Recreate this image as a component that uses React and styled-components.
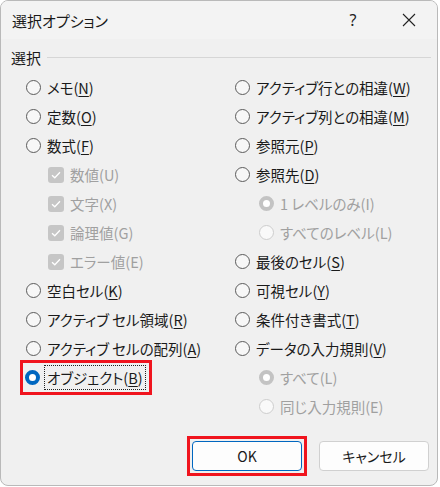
import React from 'react'
import styled, { createGlobalStyle } from 'styled-components'

const Global = createGlobalStyle`
  html, body { margin: 0; padding: 0; background: #ffffff; }
  body {
    font-family: "Noto Sans CJK JP", "Noto Sans", sans-serif;
    font-feature-settings: "palt";
    color: #1a1a1a;
  }
`

const Window = styled.div`
  width: 438px;
  height: 486px;
  box-sizing: border-box;
  border: 1px solid #b9b9b9;
  border-radius: 8px;
  background: #f0f0f0;
  display: flex;
  flex-direction: column;
  overflow: hidden;
`

const TitleBar = styled.div`
  height: 38px;
  display: flex;
  align-items: center;
  padding-left: 11px;
  background: #f3f3f3;
  font-size: 15px;
`

const Title = styled.div`
  flex: 1;
`

const TitleButton = styled.div`
  width: 56px;
  height: 38px;
  display: flex;
  align-items: center;
  justify-content: center;
  font-family: "Noto Sans", sans-serif;
  font-size: 16px;
  color: #222;
`

const GroupHead = styled.div`
  display: flex;
  align-items: center;
  gap: 6px;
  margin: 8px 6px 0 10px;
  height: 20px;
  font-size: 15px;
  &::after {
    content: '';
    flex: 1;
    height: 1px;
    background: #d6d6d6;
  }
`

const Columns = styled.div`
  display: grid;
  grid-template-columns: 209px 1fr;
  padding: 6px 0 0 25px;
`

const Column = styled.div`
  display: flex;
  flex-direction: column;
`

const Row = styled.div`
  height: 29px;
  display: flex;
  align-items: center;
  padding-left: ${p => p.indent || 0}px;
`

const Option = styled.div`
  display: inline-flex;
  align-items: center;
  gap: 6px;
  font-size: 14.5px;
  color: ${p => (p.disabled ? '#a0a0a0' : '#1a1a1a')};
  white-space: pre;
  ${p => p.highlight && `
    outline: 3px solid #f0141e;
    outline-offset: 0;
    padding: 4px 5px 4px 2px;
    margin-left: -3px;
  `}
`

const Radio = styled.span`
  width: 15px;
  height: 15px;
  box-sizing: border-box;
  border-radius: 50%;
  flex: none;
  ${p => {
    if (p.checked && p.disabled) return 'border: 4px solid #c3c3c3; background: #fff;'
    if (p.checked) return 'border: 4px solid #0067c0; background: #fff;'
    if (p.disabled) return 'border: 1px solid #cdcdcd; background: #f9f9f9;'
    return 'border: 1px solid #5b5b5b; background: #f7f7f7;'
  }}
`

const Check = styled.span`
  width: 16px;
  height: 16px;
  border-radius: 3px;
  background: #c6c6c6;
  flex: none;
  display: flex;
  align-items: center;
  justify-content: center;
`

const Label = styled.span`
  ${p => p.focus && `
    outline: 1px dotted #222;
    outline-offset: 1px;
    padding: 0 1px;
  `}
  u { text-decoration-thickness: 1px; text-underline-offset: 2px; }
`

const Footer = styled.div`
  display: flex;
  justify-content: flex-end;
  gap: 17px;
  padding: 15px 8px 0 0;
`

const RedFrame = styled.div`
  border: 3px solid #f0141e;
  padding: 2px;
  margin-right: -5px;
  display: flex;
`

const Button = styled.button`
  width: 110px;
  height: 30px;
  box-sizing: border-box;
  border-radius: 4px;
  background: #fdfdfd;
  border: 1px solid ${p => (p.primary ? '#0067c0' : '#d0d0d0')};
  font-family: "Noto Sans CJK JP", "Noto Sans", sans-serif;
  font-feature-settings: "palt";
  font-size: 14px;
  color: #1a1a1a;
  padding: 0;
  align-self: center;
`

const CheckMark = () => (
  <svg width="10" height="8" viewBox="0 0 10 8">
    <path d="M1 4.2 L3.8 6.8 L9 1.2" fill="none" stroke="#fff" strokeWidth="1.3" />
  </svg>
)

const left = [
  { t: 'メモ(', k: 'N' },
  { t: '定数(', k: 'O' },
  { t: '数式(', k: 'F' },
  { t: '数値(U)', box: true },
  { t: '文字(X)', box: true },
  { t: '論理値(G)', box: true },
  { t: 'エラー値(E)', box: true },
  { t: '空白セル(', k: 'K' },
  { t: 'アクティブ セル領域(', k: 'R' },
  { t: 'アクティブ セルの配列(', k: 'A' },
  { t: 'オブジェクト(', k: 'B', on: true },
]

const right = [
  { t: 'アクティブ行との相違(', k: 'W' },
  { t: 'アクティブ列との相違(', k: 'M' },
  { t: '参照元(', k: 'P' },
  { t: '参照先(', k: 'D' },
  { t: '1 レベルのみ(I)', sub: true, on: true },
  { t: 'すべてのレベル(L)', sub: true },
  { t: '最後のセル(', k: 'S' },
  { t: '可視セル(', k: 'Y' },
  { t: '条件付き書式(', k: 'T' },
  { t: 'データの入力規則(', k: 'V' },
  { t: 'すべて(L)', sub: true, on: true },
  { t: '同じ入力規則(E)', sub: true },
]

function Item({ item }) {
  const disabled = item.box || item.sub
  return (
    <Row indent={item.box ? 22 : item.sub ? 24 : 0}>
      <Option disabled={disabled} highlight={item.on && !disabled}>
        {item.box ? (
          <Check><CheckMark /></Check>
        ) : (
          <Radio checked={item.on} disabled={disabled} />
        )}
        <Label focus={item.on && !disabled}>
          {item.k ? (
            <>
              {item.t}<u>{item.k}</u>)
            </>
          ) : item.t}
        </Label>
      </Option>
    </Row>
  )
}

export default function App() {
  return (
    <>
      <Global />
      <Window>
        <TitleBar>
          <Title>選択オプション</Title>
          <TitleButton>?</TitleButton>
          <TitleButton>
            <svg width="14" height="14" viewBox="0 0 14 14">
              <path d="M1 1 L13 13 M13 1 L1 13" stroke="#222" strokeWidth="1.1" />
            </svg>
          </TitleButton>
        </TitleBar>
        <GroupHead>選択</GroupHead>
        <Columns>
          <Column>
            {left.map((it, i) => <Item key={i} item={it} />)}
          </Column>
          <Column>
            {right.map((it, i) => <Item key={i} item={it} />)}
          </Column>
        </Columns>
        <Footer>
          <RedFrame>
            <Button primary>OK</Button>
          </RedFrame>
          <Button>キャンセル</Button>
        </Footer>
      </Window>
    </>
  )
}
